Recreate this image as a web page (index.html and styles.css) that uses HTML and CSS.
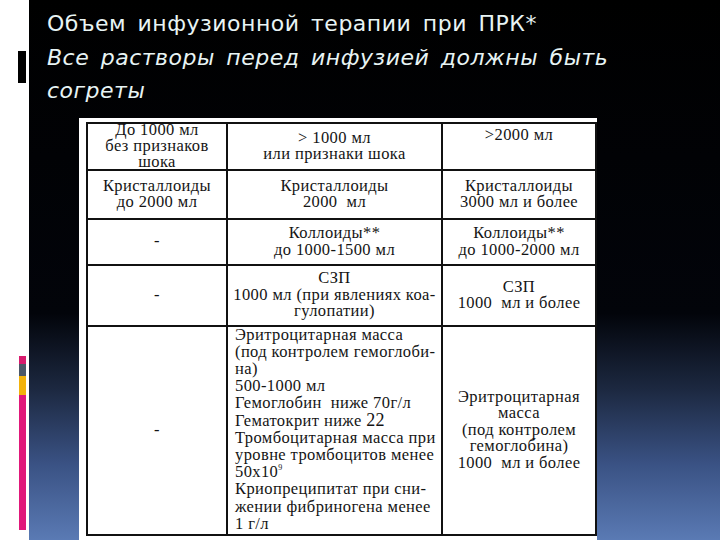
FILE: index.html
```html
<!DOCTYPE html>
<html lang="ru">
<head>
<meta charset="utf-8">
<title>Объем инфузионной терапии при ПРК</title>
<link rel="stylesheet" href="styles.css">
</head>
<body>
<div class="page">
  <div class="strip">
    <div class="mark"></div>
    <div class="tabs">
      <div class="tab t-mag1"></div>
      <div class="tab t-grey"></div>
      <div class="tab t-yel"></div>
      <div class="tab t-mag2"></div>
    </div>
  </div>
  <div class="main">
    <div class="title">
      <div class="line">Объем инфузионной терапии при ПРК*</div>
      <div class="line it">Все растворы перед инфузией должны быть</div>
      <div class="line it">согреты</div>
    </div>
    <div class="sheet">
      <table class="grid">
        <colgroup>
          <col class="c1"><col class="c2"><col class="c3">
        </colgroup>
        <tr class="r1">
          <td><div class="stack">До 1000 мл<br>без признаков<br>шока</div></td>
          <td>&gt; 1000 мл<br>или признаки шока</td>
          <td class="top">&gt;2000 мл</td>
        </tr>
        <tr class="r2">
          <td>Кристаллоиды<br>до 2000 мл</td>
          <td>Кристаллоиды<br>2000&nbsp; мл</td>
          <td>Кристаллоиды<br>3000 мл и более</td>
        </tr>
        <tr class="r3">
          <td>-</td>
          <td>Коллоиды**<br>до 1000-1500 мл</td>
          <td>Коллоиды**<br>до 1000-2000 мл</td>
        </tr>
        <tr class="r4">
          <td>-</td>
          <td>СЗП<br>1000 мл (при явлениях коа-<br>гулопатии)</td>
          <td>СЗП<br>1000&nbsp; мл и более</td>
        </tr>
        <tr class="r5">
          <td>-</td>
          <td class="list"><div class="lines">Эритроцитарная масса<br>(под контролем гемоглоби-<br>на)<br>500-1000 мл<br>Гемоглобин&nbsp; ниже 70г/л<br>Гематокрит ниже <span class="big">22</span><br>Тромбоцитарная масса при<br>уровне тромбоцитов менее<br>50х10<sup>9</sup><br>Криопреципитат при сни-<br>жении фибриногена менее<br>1 г/л</div></td>
          <td>Эритроцитарная<br>масса<br>(под контролем<br>гемоглобина)<br>1000&nbsp; мл и более</td>
        </tr>
      </table>
    </div>
  </div>
</div>
</body>
</html>
```
FILE: styles.css
```css
html, body {
  margin: 0;
  padding: 0;
  background: #000;
}
.page {
  display: flex;
  width: 720px;
  height: 540px;
  overflow: hidden;
}
.strip {
  width: 29px;
  flex: none;
  background: #fff;
  padding-left: 18px;
  box-sizing: border-box;
}
.mark {
  width: 8px;
  height: 32px;
  margin-top: 51px;
  background: #000;
}
.tabs {
  margin-top: 273px;
  width: 7px;
  margin-left: 1px;
}
.tab { width: 7px; }
.t-mag1 { height: 8px; background: #d81b6e; }
.t-grey { height: 12px; background: #4c5868; }
.t-yel { height: 19px; background: #f2b20c; }
.t-mag2 { height: 135px; background: #e0187a; }
.main {
  flex: 1;
  background: linear-gradient(to bottom, #000 0%, #02040a 58%, #1c2840 72%, #3a5284 86%, #5a7ab4 100%);
  padding-left: 18px;
}
.title {
  padding-top: 7px;
  color: #e8f4f4;
  font-family: "DejaVu Sans", sans-serif;
  font-size: 22px;
  line-height: 33.5px;
  letter-spacing: 0.5px;
  word-spacing: 4px;
}
.it { font-style: italic; }
.sheet {
  margin-top: 10px;
  margin-left: 32px;
  width: 518px;
  height: 430px;
  background: #fff;
  padding: 4px 2px 0 7px;
  box-sizing: border-box;
}
.grid {
  border-collapse: collapse;
  width: 509px;
  table-layout: fixed;
  font-family: "Liberation Serif", "Times New Roman", serif;
  font-size: 16.5px;
  line-height: 16.5px;
  letter-spacing: 0.4px;
  color: #141414;
}
.c1 { width: 140px; }
.c2 { width: 215px; }
.c3 { width: 154px; }
.grid td {
  border: 2px solid #111;
  text-align: center;
  vertical-align: middle;
  padding: 0 1px;
  white-space: nowrap;
}
.r1 td { height: 42px; }
.r2 td { height: 47px; }
.r3 td { height: 44px; }
.r4 td { height: 59px; }
.r5 td { height: 207px; }
.stack {
  line-height: 16px;
  margin: -5px 0 -4px;
}
.grid td.top { vertical-align: top; padding-top: 3px; }
.grid td.list {
  text-align: left;
  vertical-align: top;
  padding-left: 7px;
}
.lines {
  line-height: 17.2px;
  margin: -1px 0 -3px;
}
.big { font-size: 18px; }
sup { font-size: 8px; line-height: 0; vertical-align: 7px; }
```
